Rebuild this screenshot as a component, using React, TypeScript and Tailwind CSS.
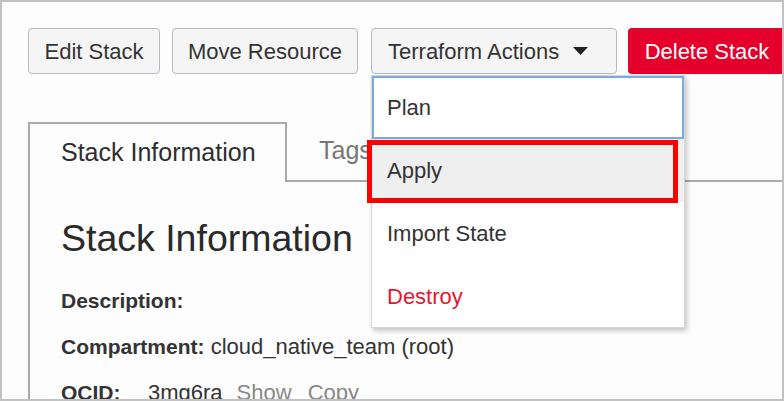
import React from "react";

const btn =
  "shrink-0 h-[46px] flex items-center justify-center rounded-[4px] border-[1.5px] border-[#b3bac4] bg-[#f5f5f5] text-[22px] text-[#333]";

export default function App() {
  return (
    <div className="w-[784px] h-[401px] border-2 border-[#c2c2c2] bg-[#fdfdfd] overflow-hidden font-['Liberation_Sans',Arial,sans-serif] text-[#333]">
      <div className="pl-[26px] pt-[26px]">
        {/* Button row */}
        <div className="flex flex-nowrap items-start gap-3">
          <button className={`${btn} w-[132px]`}>Edit Stack</button>
          <button className={`${btn} w-[186px]`}>Move Resource</button>
          <div className="relative shrink-0 ml-[1px]">
            <button className={`${btn} w-[246px] !justify-start pl-[16px]`}>
              <span>Terraform Actions</span>
              <svg
                className="ml-[14px]"
                width="15"
                height="8"
                viewBox="0 0 15 8"
              >
                <path d="M0 0 L15 0 L7.5 8 Z" fill="#222" />
              </svg>
            </button>
            {/* Dropdown */}
            <div className="absolute left-0 top-[47px] z-10 w-[314px] border border-[#d6d6d6] bg-white shadow-[2px_3px_5px_rgba(0,0,0,0.22)]">
              <div className="h-[63px] border-2 border-[#7aaae0] pl-[13px] flex items-center text-[22px] text-[#333]">
                Plan
              </div>
              <div className="h-[63px] bg-[#efefef] pl-[15px] flex items-center text-[22px] text-[#333]">
                Apply
              </div>
              <div className="h-[63px] pl-[15px] flex items-center text-[22px] text-[#333]">
                Import State
              </div>
              <div className="h-[62px] pl-[15px] flex items-center text-[22px] text-[#e3172e]">
                Destroy
              </div>
              <div className="absolute left-[-5px] top-[64px] w-[311px] h-[63px] border-[5px] border-[#ff0000]" />
            </div>
          </div>
          <button className="shrink-0 ml-[-1px] h-[46px] w-[158px] rounded-[4px] bg-[#e4002b] text-white text-[22px] flex items-center justify-center">
            Delete Stack
          </button>
        </div>

        {/* Tabs */}
        <div className="mt-[48px] flex">
          <div className="w-[259px] h-[60px] shrink-0 border-2 border-b-0 border-[#a9a9a9] pl-[31px] flex items-center text-[25px] text-[#2e2e2e]">
            Stack Information
          </div>
          <div className="flex-1 h-[60px] border-b-2 border-[#a9a9a9] pl-[32px] flex items-center text-[25px] text-[#777]">
            Tags
          </div>
        </div>

        {/* Panel */}
        <div className="h-[300px] border-l-2 border-[#a9a9a9] pl-[31px] pt-[38px]">
          <h1 className="text-[37.5px] leading-none text-[#2a2a2a]">
            Stack Information
          </h1>
          <div className="mt-[20px]">
            <div className="h-[46px] leading-[46px] whitespace-nowrap">
              <span className="font-bold text-[21px]">Description:</span>
            </div>
            <div className="h-[46px] leading-[46px] whitespace-nowrap">
              <span className="font-bold text-[21px]">Compartment:</span>
              <span className="text-[22px]"> cloud_native_team (root)</span>
            </div>
            <div className="h-[46px] leading-[46px] whitespace-nowrap flex items-baseline">
              <span className="font-bold text-[21px] w-[87px] shrink-0">
                OCID:
              </span>
              <span className="text-[22px]">3mg6ra</span>
              <span className="text-[22px] text-[#888] ml-[14px]">Show</span>
              <span className="text-[22px] text-[#888] ml-[16px]">Copy</span>
            </div>
          </div>
        </div>
      </div>
    </div>
  );
}
